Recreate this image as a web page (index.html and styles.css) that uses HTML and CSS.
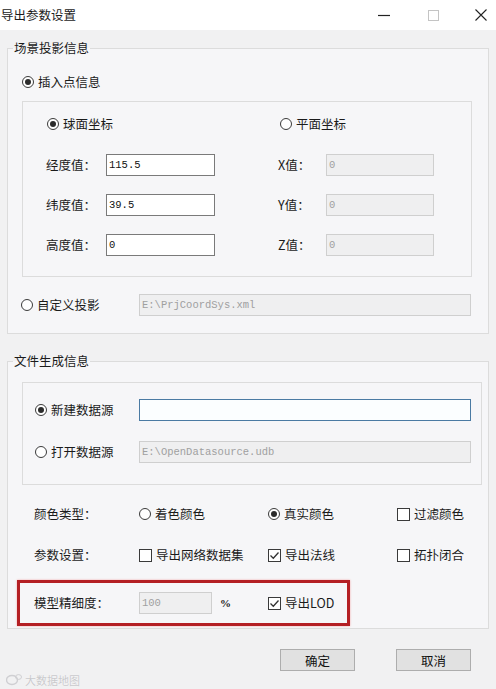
FILE: index.html
```html
<!DOCTYPE html>
<html lang="zh-CN">
<head>
    <meta charset="UTF-8">
    <meta name="viewport" content="width=device-width, initial-scale=1.0">
    <title>导出参数设置</title>
    <link rel="stylesheet" href="styles.css">
</head>
<body>
    <header class="titlebar">
        <span class="title">导出参数设置</span>
        <div class="win-btns">
            <svg class="win-min" width="14" height="14" viewBox="0 0 14 14"><path d="M1 7.5 H13" stroke="#222" stroke-width="1.2"/></svg>
            <svg class="win-max" width="14" height="14" viewBox="0 0 14 14"><rect x="2.5" y="2.5" width="10" height="10" fill="none" stroke="#c4c4c4"/></svg>
            <svg class="win-close" width="14" height="14" viewBox="0 0 14 14"><path d="M1.5 1.5 L12.5 12.5 M12.5 1.5 L1.5 12.5" stroke="#222" stroke-width="1.1"/></svg>
        </div>
    </header>

    <main class="dialog">
        <fieldset class="group scene">
            <legend>场景投影信息</legend>
            <label class="opt top-opt"><span class="radio on"></span>插入点信息</label>

            <div class="inner point-box">
                <div class="coord-head">
                    <label class="opt sphere"><span class="radio on"></span>球面坐标</label>
                    <label class="opt"><span class="radio"></span>平面坐标</label>
                </div>
                <div class="coord-grid">
                    <span class="lbl">经度值：</span>
                    <div class="field">115.5</div>
                    <span></span>
                    <span class="lbl">X值：</span>
                    <div class="field off">0</div>

                    <span class="lbl">纬度值：</span>
                    <div class="field">39.5</div>
                    <span></span>
                    <span class="lbl">Y值：</span>
                    <div class="field off">0</div>

                    <span class="lbl">高度值：</span>
                    <div class="field">0</div>
                    <span></span>
                    <span class="lbl">Z值：</span>
                    <div class="field off">0</div>
                </div>
            </div>

            <div class="path-row">
                <label class="opt"><span class="radio"></span>自定义投影</label>
                <div class="field off wide">E:\PrjCoordSys.xml</div>
            </div>
        </fieldset>

        <fieldset class="group file">
            <legend>文件生成信息</legend>
            <div class="inner source-box">
                <div class="src-row">
                    <label class="opt"><span class="radio on"></span>新建数据源</label>
                    <div class="field wide active"></div>
                </div>
                <div class="src-row">
                    <label class="opt"><span class="radio"></span>打开数据源</label>
                    <div class="field off wide">E:\OpenDatasource.udb</div>
                </div>
            </div>

            <div class="param-grid">
                <span class="lbl">颜色类型：</span>
                <label class="opt"><span class="radio"></span>着色颜色</label>
                <label class="opt"><span class="radio on"></span>真实颜色</label>
                <label class="opt"><span class="check"></span>过滤颜色</label>

                <span class="lbl">参数设置：</span>
                <label class="opt"><span class="check"></span>导出网络数据集</label>
                <label class="opt"><span class="check on"><svg width="11" height="11" viewBox="0 0 11 11"><path d="M1.5 5.5 L4.3 8.3 L9.5 2.5" fill="none" stroke="#333" stroke-width="1.3"/></svg></span>导出法线</label>
                <label class="opt"><span class="check"></span>拓扑闭合</label>
            </div>

            <div class="lod-box">
                <span class="lbl">模型精细度：</span>
                <div class="field off">100</div>
                <span class="pct">%</span>
                <label class="opt"><span class="check on"><svg width="11" height="11" viewBox="0 0 11 11"><path d="M1.5 5.5 L4.3 8.3 L9.5 2.5" fill="none" stroke="#333" stroke-width="1.3"/></svg></span>导出LOD</label>
            </div>
        </fieldset>

        <div class="actions">
            <button class="btn">确定</button>
            <button class="btn">取消</button>
        </div>

        <div class="watermark">
            <svg width="16" height="12" viewBox="0 0 16 12"><ellipse cx="6" cy="6" rx="5.5" ry="4.5" fill="none" stroke="#cfcfd2" stroke-width="1.4"/><ellipse cx="12.5" cy="3" rx="3" ry="2.4" fill="none" stroke="#cfcfd2" stroke-width="1"/></svg>
            <span>大数据地图</span>
        </div>
    </main>
</body>
</html>
```

FILE: styles.css
```css
:root{
    --bg:#f1f1f2;
    --panel:#f6f6f8;
    --line:#dcdcdc;
    --text:#1b1b1b;
    --dim:#a0a0a0;
}

*{
    box-sizing: border-box;
    margin: 0;
    padding: 0;
}
body{
    width: 496px;
    height: 689px;
    background: var(--bg);
    color: var(--text);
    font-family: "Noto Sans CJK SC", "Microsoft YaHei", sans-serif;
    font-size: 12.5px;
    line-height: 16px;
    overflow: hidden;
}

/* title bar */
.titlebar{
    height: 30px;
    background: #fff;
    display: flex;
    align-items: center;
    justify-content: space-between;
}
.titlebar .title{
    padding-left: 1px;
    font-size: 12.5px;
}
.win-btns{
    display: flex;
    align-items: center;
    padding-right: 8px;
}
.win-min{ margin-right: 35px; }
.win-max{ margin-right: 34px; }

/* groups */
.group{
    border: 1px solid var(--line);
    background: var(--panel);
    margin: 0 7px;
    min-inline-size: 0;
}
.group legend{
    margin-left: 5px;
    padding: 0 1px;
    line-height: 16px;
    font-size: 12.5px;
}
.scene{
    margin-top: 10px;
    padding-bottom: 17px;
}
.file{
    margin-top: 19px;
    padding-bottom: 2px;
}

.inner{
    border: 1px solid var(--line);
    margin-left: 14px;
}

/* radio / check */
.opt{
    display: flex;
    align-items: center;
    gap: 4px;
    white-space: nowrap;
}
.radio{
    width: 12px;
    height: 12px;
    border: 1px solid #3a3a3a;
    border-radius: 50%;
    background: #fff;
    display: inline-flex;
    align-items: center;
    justify-content: center;
    flex: none;
}
.radio.on::after{
    content: "";
    width: 6px;
    height: 6px;
    border-radius: 50%;
    background: #2b2b2b;
}
.check{
    width: 13px;
    height: 13px;
    border: 1px solid #3a3a3a;
    background: #fff;
    display: inline-flex;
    align-items: center;
    justify-content: center;
    flex: none;
}

/* text boxes */
.field{
    height: 22px;
    border: 1px solid #7a7a7a;
    background: #fff;
    font-family: "Liberation Mono", monospace;
    font-size: 10.5px;
    line-height: 20px;
    padding-left: 2px;
    color: #111;
}
.field.off{
    border-color: #cfcfcf;
    background: #efeff0;
    color: var(--dim);
}
.field.active{
    border-color: #4a7aa3;
    background: #fbfeff;
}
.field.wide{
    width: 332px;
}

/* scene group */
.top-opt{
    margin: 18px 0 0 14px;
    height: 16px;
}
.point-box{
    margin-top: 11px;
    width: 450px;
    height: 176px;
}
.coord-head{
    display: flex;
    margin: 14px 0 0 24px;
    height: 16px;
}
.coord-head .sphere{
    width: 233px;
}
.coord-grid{
    display: grid;
    grid-template-columns: 60px 109px 63px 48px 108px;
    grid-auto-rows: 22px;
    row-gap: 18px;
    align-items: center;
    margin: 22px 0 0 23px;
}
.path-row{
    display: flex;
    align-items: center;
    margin: 17px 0 0 13px;
}
.path-row .opt{
    width: 118px;
}

/* file group */
.source-box{
    margin-top: 13px;
    width: 460px;
    padding: 16px 0 21px 12px;
}
.src-row{
    display: flex;
    align-items: center;
}
.src-row + .src-row{
    margin-top: 20px;
}
.src-row .opt{
    width: 104px;
}

.param-grid{
    display: grid;
    grid-template-columns: 105px 129px 129px auto;
    grid-auto-rows: 22px;
    row-gap: 19px;
    align-items: center;
    margin: 18px 0 0 26px;
}

.lod-box{
    display: grid;
    grid-template-columns: 105px 73px 56px auto;
    align-items: center;
    width: 333px;
    height: 46px;
    margin: 14px 0 0 9px;
    padding-left: 14px;
    border: 3px solid #b41f24;
    box-shadow: 0 0 2px #f1a6a8;
}
.lod-box .pct{
    padding-left: 8px;
    font-family: "Liberation Serif", serif;
    font-weight: bold;
    font-size: 11px;
}

/* buttons */
.actions{
    display: flex;
    justify-content: flex-end;
    gap: 41px;
    margin-top: 20px;
    padding-right: 25px;
}
.btn{
    width: 75px;
    height: 22px;
    border: 1px solid #adadad;
    background: #e1e1e1;
    font-family: inherit;
    font-size: 12.5px;
    color: #111;
}

.watermark{
    display: flex;
    align-items: center;
    gap: 3px;
    margin: 1px 0 0 6px;
    font-size: 11px;
    color: #c9c9cc;
    text-shadow: 0 0 1px #fff;
}
```
